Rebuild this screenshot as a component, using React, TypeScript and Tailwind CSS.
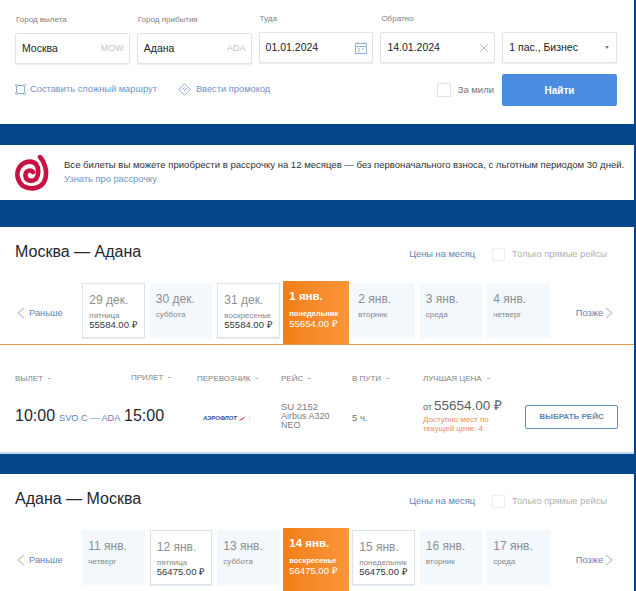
const F = "font-['Liberation_Sans',Arial,sans-serif]";

type Day = { d: string; w: string; p?: string; sel?: boolean };

const Caret = () => <span className="ml-[5px] inline-block h-px w-[3px] bg-[#b5b9bd] align-middle" />;

function Field({ label, children, className }: { label: string; children: React.ReactNode; className?: string }) {
  return (
    <div className={`w-[115px] ${className ?? ""}`}>
      <div className="h-[19px] pl-[1px] text-[8px] leading-[12px] text-[#7b7f83]">{label}</div>
      <div className="flex h-[31px] items-center rounded-[2px] border border-[#e3e3e3] bg-white pl-[6px] pr-[5px] text-[10.5px] text-[#1d2226] shadow-[0_1px_1px_rgba(0,0,0,0.08)]">
        {children}
      </div>
    </div>
  );
}

function Card({ day }: { day: Day }) {
  if (day.sel) {
    return (
      <div className="-ml-[1.5px] -mr-[2px] -mt-[2px] h-[63px] w-[66px] shrink-0 bg-gradient-to-r from-[#f27f15] to-[#f9963a] pl-[6px] pt-[8px] text-white">
        <div className="whitespace-nowrap text-[11.5px] font-bold leading-[14px]">{day.d}</div>
        <div className="mt-[6px] whitespace-nowrap text-[7.5px] font-bold leading-[10px]">{day.w}</div>
        <div className="whitespace-nowrap text-[9.5px] leading-[10px]">{day.p}</div>
      </div>
    );
  }
  return (
    <div className={`h-[55px] w-[62.5px] shrink-0 pl-[6px] pt-[9px] ${day.p ? "border border-[#dbe3ea] bg-white pl-[5px] pt-[8px] shadow-[0_1px_1px_rgba(0,0,0,0.08)]" : "bg-[#f3f8fd]"}`}>
      <div className="whitespace-nowrap text-[12px] leading-[14px] text-[#8b8f93]">{day.d}</div>
      <div className="mt-[4px] whitespace-nowrap text-[8px] leading-[9px] text-[#85898d]">{day.w}</div>
      {day.p && <div className="whitespace-nowrap text-[9.5px] leading-[10px] text-[#33383c]">{day.p}</div>}
    </div>
  );
}

function Chevron({ right }: { right?: boolean }) {
  return (
    <svg width="8" height="12" viewBox="0 0 8 12" fill="none" stroke="#c4c8cc" strokeWidth="1.2" className="shrink-0">
      <path d={right ? "M1 1l6 5-6 5" : "M7 1L1 6l6 5"} />
    </svg>
  );
}

function Route({ title, days }: { title: string; days: Day[] }) {
  return (
    <>
      <div className="flex h-[54px] items-start pl-[15px] pr-[27px] pt-[15px]">
        <div className="text-[16px] leading-[20px] text-[#22282d]">{title}</div>
        <div className="ml-auto mt-[5px] flex items-center">
          <span className="text-[9.3px] leading-[14px] text-[#5f84b8]">Цены на месяц</span>
          <span className="ml-[17px] h-[13px] w-[13px] border border-[#eceeef] bg-white" />
          <span className="ml-[7px] text-[9.3px] leading-[14px] text-[#aeb2b6]">Только прямые рейсы</span>
        </div>
      </div>
      <div className="flex h-[63px] items-start pl-[17px] pt-[2px]">
        <div className="mt-[24px] flex w-[65.3px] shrink-0 items-center gap-[4px]">
          <Chevron />
          <span className="text-[9.3px] leading-[12px] text-[#5f84b8]">Раньше</span>
        </div>
        <div className="flex shrink-0 items-start gap-[5px]">
          {days.map((d) => (
            <Card key={d.d} day={d} />
          ))}
        </div>
        <div className="ml-[26px] mt-[24px] flex shrink-0 items-center gap-[2px]">
          <span className="text-[9.3px] leading-[12px] text-[#5f84b8]">Позже</span>
          <Chevron right />
        </div>
      </div>
    </>
  );
}

const there: Day[] = [
  { d: "29 дек.", w: "пятница", p: "55584.00 ₽" },
  { d: "30 дек.", w: "суббота" },
  { d: "31 дек.", w: "воскресенье", p: "55584.00 ₽" },
  { d: "1 янв.", w: "понедельник", p: "55654.00 ₽", sel: true },
  { d: "2 янв.", w: "вторник" },
  { d: "3 янв.", w: "среда" },
  { d: "4 янв.", w: "четверг" },
];
const back: Day[] = [
  { d: "11 янв.", w: "четверг" },
  { d: "12 янв.", w: "пятница", p: "56475.00 ₽" },
  { d: "13 янв.", w: "суббота" },
  { d: "14 янв.", w: "воскресенье", p: "56475.00 ₽", sel: true },
  { d: "15 янв.", w: "понедельник", p: "56475.00 ₽" },
  { d: "16 янв.", w: "вторник" },
  { d: "17 янв.", w: "среда" },
];

const Head = ({ children, className }: { children: string; className?: string }) => (
  <div className={`whitespace-nowrap text-[8px] leading-[12px] text-[#7e8286] ${className ?? ""}`}>
    {children}
    <Caret />
  </div>
);

export default function App() {
  return (
    <div className={`${F} flex h-[591px] w-[636px] flex-col overflow-hidden bg-[#03468c]`}>
      <div className="mr-[2px] h-[124px] shrink-0 bg-white pl-[15px] pr-[17px] pt-[13px]">
        <div className="flex gap-[7px]">
          <Field label="Город вылета" className="mt-[1px]">
            <span>Москва</span>
            <span className="ml-auto text-[9px] text-[#c3c5c7]">MOW</span>
          </Field>
          <Field label="Город прибытия" className="mt-[1px]">
            <span>Адана</span>
            <span className="ml-auto text-[9px] text-[#c3c5c7]">ADA</span>
          </Field>
          <Field label="Туда">
            <span>01.01.2024</span>
            <svg width="12" height="12" viewBox="0 0 12 12" fill="none" stroke="#8fb3d6" strokeWidth="1" className="ml-auto">
              <rect x="0.5" y="1.5" width="11" height="10" />
              <path d="M0.5 4.5h11M3 0v2M9 0v2M3 7h2M7 7h2M3 9h2" />
            </svg>
          </Field>
          <Field label="Обратно">
            <span>14.01.2024</span>
            <svg width="10" height="10" viewBox="0 0 10 10" fill="none" stroke="#a9c6df" strokeWidth="1" className="ml-auto">
              <path d="M1 1l8 8M9 1L1 9" />
            </svg>
          </Field>
          <div className="w-[115px] pt-[19px]">
            <div className="flex h-[31px] items-center rounded-[2px] border border-[#e3e3e3] bg-white pl-[6px] pr-[7px] text-[10.5px] text-[#1d2226] shadow-[0_1px_1px_rgba(0,0,0,0.08)]">
              <span>1 пас., Бизнес</span>
              <span className="ml-auto h-0 w-0 border-x-[2px] border-t-[3px] border-x-transparent border-t-[#5f84b8]" />
            </div>
          </div>
        </div>
        <div className="mt-[10px] flex items-start">
          <div className="mt-[8px] flex items-center text-[9.3px] leading-[14px] text-[#6d94c8]">
            <svg width="11" height="11" viewBox="0 0 11 11" fill="none" stroke="#7ea6d4" strokeWidth="0.9" className="mr-[4px]">
              <rect x="1.5" y="1.5" width="8" height="8" rx="1.5" />
              <circle cx="1.5" cy="1.5" r="1" fill="#fff" />
              <circle cx="9.5" cy="1.5" r="1" fill="#fff" />
              <circle cx="1.5" cy="9.5" r="1" fill="#fff" />
              <circle cx="9.5" cy="9.5" r="1" fill="#fff" />
            </svg>
            <span>Составить сложный маршрут</span>
          </div>
          <div className="ml-[21px] mt-[8px] flex items-center text-[9.3px] leading-[14px] text-[#6d94c8]">
            <svg width="13" height="13" viewBox="0 0 13 13" fill="none" stroke="#7ea6d4" strokeWidth="0.9" className="mr-[5px]">
              <path d="M6.5 0.8L12.2 6.5 6.5 12.2 0.8 6.5z" />
              <path d="M4.5 6.5l2-2M6 8l3-3" />
            </svg>
            <span>Ввести промокод</span>
          </div>
          <div className="ml-auto mt-[9px] flex items-center">
            <span className="h-[14px] w-[14px] border border-[#dfe1e3] bg-white" />
            <span className="ml-[7px] text-[9.5px] leading-[14px] text-[#6f7377]">За мили</span>
          </div>
          <div className="ml-[8px] flex h-[32px] w-[115px] items-center justify-center rounded-[2px] bg-[#4a8de0] text-[10px] font-bold text-white">
            Найти
          </div>
        </div>
      </div>

      <div className="mr-[2px] mt-[21px] flex h-[55px] shrink-0 items-center bg-white pl-[15px]">
        <svg width="34" height="36" viewBox="0 0 34 36" fill="none" className="shrink-0">
          <path
            d="M25 2C31 9 33 20 29 27C25 34 15 35 8 31C2 26 1 18 4 13C8 6 17 5 21 9C24 13 24 20 21 24C17 27 11 26 10.5 21C10 16 15 14 18 17"
            stroke="#c9123f"
            strokeWidth="4.6"
            strokeLinecap="round"
          />
        </svg>
        <div className="ml-[15px] -mt-[2px] min-w-0 leading-[14px]">
          <div className="whitespace-nowrap text-[9.55px] text-[#2e3236]">Все билеты вы можете приобрести в рассрочку на 12 месяцев — без первоначального взноса, с льготным периодом 30 дней.</div>
          <div className="text-[9.3px] text-[#6d94c8]">Узнать про рассрочку</div>
        </div>
      </div>

      <div className="mr-[2px] mt-[27px] h-[226px] shrink-0 bg-white">
        <Route title="Москва — Адана" days={there} />
        <div className="h-px bg-[#ee9a45]" />
        <div className="flex items-start border-b-2 border-[#c3d7ea] pl-[15px] pt-[28px]">
          <div className="h-[79px] w-[116px]">
            <Head>ВЫЛЕТ</Head>
            <div className="mt-[19px] flex items-baseline whitespace-nowrap">
              <span className="text-[16px] leading-[24px] text-[#22282d]">10:00</span>
              <span className="ml-[4px] text-[9.2px] text-[#5f84b8]">SVO C — ADA</span>
            </div>
          </div>
          <div className="w-[66px]">
            <Head className="-mt-[1px]">ПРИЛЕТ</Head>
            <div className="-ml-[7px] mt-[20px] text-[16px] leading-[24px] text-[#22282d]">15:00</div>
          </div>
          <div className="w-[84px]">
            <Head>ПЕРЕВОЗЧИК</Head>
            <div className="ml-[6px] mt-[29px] flex items-center">
              <span className="text-[6px] font-bold italic leading-[8px] text-[#1d4f9c]">АЭРОФЛОТ</span>
              <svg width="13" height="6" viewBox="0 0 13 6" className="ml-[1px] shrink-0">
                <path d="M0 6L8 1 4 5z" fill="#d9413f" />
                <path d="M2 4L7 2 4 3.5z" fill="#3b6fb5" />
                <path d="M11 1l1 2-1 2" fill="none" stroke="#c9ccd0" strokeWidth="0.7" />
              </svg>
            </div>
          </div>
          <div className="w-[71px]">
            <Head>РЕЙС</Head>
            <div className="mt-[17px] text-[9px] leading-[9px] text-[#7a7e82]">
              <div className="mb-[1px] text-[9.5px]">SU 2152</div>
              <div>Airbus A320</div>
              <div>NEO</div>
            </div>
          </div>
          <div className="w-[71px]">
            <Head>В ПУТИ</Head>
            <div className="mt-[27px] text-[9.5px] leading-[12px] text-[#6c7074]">5 ч.</div>
          </div>
          <div className="w-[102px]">
            <Head>ЛУЧШАЯ ЦЕНА</Head>
            <div className="mt-[13px] flex items-baseline whitespace-nowrap text-[#5c6064]">
              <span className="text-[9px]">от</span>
              <span className="ml-[2px] text-[13.5px] leading-[15px]">55654.00 ₽</span>
            </div>
            <div className="text-[8px] leading-[9px] text-[#ee8a5e]">
              Доступно мест по
              <br />
              текущей цене: 4
            </div>
          </div>
          <div className="mt-[32px] flex h-[24px] w-[93px] shrink-0 items-center justify-center rounded-[2px] border border-[#5f8fc0] text-[8px] font-bold text-[#5f84b8]">
            ВЫБРАТЬ РЕЙС
          </div>
        </div>
      </div>

      <div className="mr-[2px] mt-[21px] grow bg-white">
        <Route title="Адана — Москва" days={back} />
      </div>
    </div>
  );
}
